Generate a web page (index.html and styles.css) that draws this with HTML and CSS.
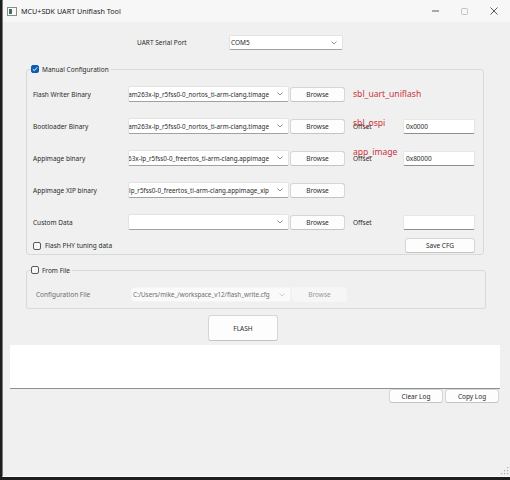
FILE: index.html
```html
<!DOCTYPE html>
<html lang="en">
<head>
    <meta charset="UTF-8">
    <meta name="viewport" content="width=device-width, initial-scale=1.0">
    <title>MCU+SDK UART Uniflash Tool</title>
    <link rel="stylesheet" href="styles.css">
</head>
<body>
    <div class="window">
        <div class="titlebar">
            <svg class="app-icon" width="10" height="9" viewBox="0 0 10 9">
                <rect x="0.5" y="0.5" width="9" height="8" fill="#fafafa" stroke="#8a8a8a"/>
                <rect x="2" y="2" width="3" height="5" fill="#3f6f66"/>
            </svg>
            <span class="title">MCU+SDK UART Uniflash Tool</span>
            <div class="caption">
                <span class="caption-btn">
                    <svg width="7" height="2" viewBox="0 0 7 2"><line x1="0" y1="1" x2="7" y2="1" stroke="#333" stroke-width="0.8"/></svg>
                </span>
                <span class="caption-btn">
                    <svg width="7" height="7" viewBox="0 0 7 7"><rect x="0.5" y="0.5" width="6" height="6" rx="1" fill="none" stroke="#b5b5b5" stroke-width="0.8"/></svg>
                </span>
                <span class="caption-btn">
                    <svg width="8" height="8" viewBox="0 0 8 8"><path d="M0.5 0.5 L7.5 7.5 M7.5 0.5 L0.5 7.5" stroke="#333" stroke-width="0.8"/></svg>
                </span>
            </div>
        </div>

        <div class="port-row">
            <span class="port-label">UART Serial Port</span>
            <div class="combo port-combo">
                <div class="combo-text start"><span>COM5</span></div>
                <svg class="chevron" width="6" height="4" viewBox="0 0 6 4"><polyline points="0.5,0.5 3,3 5.5,0.5" fill="none" stroke="#666" stroke-width="0.7"/></svg>
            </div>
        </div>

        <fieldset class="group manual">
            <legend><span class="check checked"><svg width="8" height="8" viewBox="0 0 8 8"><polyline points="1.8,4.2 3.3,5.6 6.2,2.4" fill="none" stroke="#fff" stroke-width="1"/></svg></span>Manual Configuration</legend>

            <div class="row">
                <span class="field-label">Flash Writer Binary</span>
                <div class="combo">
                    <div class="combo-text"><span>am263x-lp_r5fss0-0_nortos_ti-arm-clang.timage</span></div>
                    <svg class="chevron" width="6" height="4" viewBox="0 0 6 4"><polyline points="0.5,0.5 3,3 5.5,0.5" fill="none" stroke="#666" stroke-width="0.7"/></svg>
                </div>
                <button class="btn browse">Browse</button>
                <div class="note"><span class="red">sbl_uart_uniflash</span></div>
            </div>

            <div class="row">
                <span class="field-label">Bootloader Binary</span>
                <div class="combo">
                    <div class="combo-text"><span>am263x-lp_r5fss0-0_nortos_ti-arm-clang.timage</span></div>
                    <svg class="chevron" width="6" height="4" viewBox="0 0 6 4"><polyline points="0.5,0.5 3,3 5.5,0.5" fill="none" stroke="#666" stroke-width="0.7"/></svg>
                </div>
                <button class="btn browse">Browse</button>
                <div class="note">Offset<span class="red over sbl">sbl_ospi</span></div>
                <div class="edit">0x0000</div>
            </div>

            <div class="row">
                <span class="field-label">Appimage binary</span>
                <div class="combo">
                    <div class="combo-text"><span>am263x-lp_r5fss0-0_freertos_ti-arm-clang.appimage</span></div>
                    <svg class="chevron" width="6" height="4" viewBox="0 0 6 4"><polyline points="0.5,0.5 3,3 5.5,0.5" fill="none" stroke="#666" stroke-width="0.7"/></svg>
                </div>
                <button class="btn browse">Browse</button>
                <div class="note">Offset<span class="red over app">app_image</span></div>
                <div class="edit">0x80000</div>
            </div>

            <div class="row">
                <span class="field-label">Appimage XIP binary</span>
                <div class="combo">
                    <div class="combo-text"><span>am263x-lp_r5fss0-0_freertos_ti-arm-clang.appimage_xip</span></div>
                    <svg class="chevron" width="6" height="4" viewBox="0 0 6 4"><polyline points="0.5,0.5 3,3 5.5,0.5" fill="none" stroke="#666" stroke-width="0.7"/></svg>
                </div>
                <button class="btn browse">Browse</button>
            </div>

            <div class="row">
                <span class="field-label">Custom Data</span>
                <div class="combo">
                    <div class="combo-text"><span></span></div>
                    <svg class="chevron" width="6" height="4" viewBox="0 0 6 4"><polyline points="0.5,0.5 3,3 5.5,0.5" fill="none" stroke="#666" stroke-width="0.7"/></svg>
                </div>
                <button class="btn browse">Browse</button>
                <div class="note">Offset</div>
                <div class="edit"></div>
            </div>

            <div class="row tail">
                <span class="check"></span>
                <span class="check-label">Flash PHY tuning data</span>
                <button class="btn save">Save CFG</button>
            </div>
        </fieldset>

        <fieldset class="group from-file">
            <legend><span class="check"></span>From File</legend>
            <div class="row file-row">
                <span class="field-label muted">Configuration File</span>
                <div class="combo disabled">
                    <div class="combo-text start"><span>C:/Users/mike_/workspace_v12/flash_write.cfg</span></div>
                    <svg class="chevron" width="6" height="4" viewBox="0 0 6 4"><polyline points="0.5,0.5 3,3 5.5,0.5" fill="none" stroke="#bbb" stroke-width="0.7"/></svg>
                </div>
                <button class="btn browse disabled">Browse</button>
            </div>
        </fieldset>

        <button class="btn flash">FLASH</button>

        <div class="log"></div>
        <div class="log-buttons">
            <button class="btn log-btn">Clear Log</button>
            <button class="btn log-btn">Copy Log</button>
        </div>

        <svg class="grip" width="8" height="8" viewBox="0 0 8 8">
            <rect x="6" y="0" width="1.2" height="1.2" fill="#b0b0b0"/>
            <rect x="3" y="3" width="1.2" height="1.2" fill="#b0b0b0"/>
            <rect x="6" y="3" width="1.2" height="1.2" fill="#b0b0b0"/>
            <rect x="0" y="6" width="1.2" height="1.2" fill="#b0b0b0"/>
            <rect x="3" y="6" width="1.2" height="1.2" fill="#b0b0b0"/>
            <rect x="6" y="6" width="1.2" height="1.2" fill="#b0b0b0"/>
        </svg>
    </div>
</body>
</html>
```

FILE: styles.css
```css
body {
    margin: 0;
    padding: 0;
    background-color: #1e1e1e;
    font-family: "Noto Sans", "Open Sans", sans-serif;
    font-size: 6.5px;
    color: #2b2b2b;
}
.window {
    margin-left: 2px;
    width: 507px;
    height: 476px;
    border-left: 1px solid #7c7c7c;
    border-bottom: 1px solid #fbfbfb;
    background-color: #f0f0f0;
    display: flex;
    flex-direction: column;
}
.titlebar {
    height: 22px;
    flex-shrink: 0;
    background-color: #f7f7f7;
    display: flex;
    align-items: center;
}
.app-icon {
    margin-left: 4px;
}
.title {
    margin-left: 4px;
    font-size: 7.2px;
    color: #222;
}
.caption {
    margin-left: auto;
    margin-right: 2px;
    display: flex;
}
.caption-btn {
    width: 29px;
    height: 22px;
    display: flex;
    align-items: center;
    justify-content: center;
}
.port-row {
    margin-top: 13px;
    padding-left: 134px;
    height: 15px;
    display: flex;
    align-items: center;
}
.port-label {
    width: 92px;
}
.combo {
    box-sizing: border-box;
    width: 161px;
    height: 16px;
    background: #fff;
    border: 1px solid #e3e3e3;
    border-bottom-color: #a2a2a2;
    border-radius: 2px;
    display: flex;
    align-items: center;
    font-size: 6.3px;
}
.port-combo {
    width: 114px;
    height: 15px;
    font-size: 6.5px;
}
.combo-text {
    flex: 1;
    min-width: 0;
    overflow: hidden;
    white-space: nowrap;
    display: flex;
    justify-content: flex-end;
}
.combo-text span {
    flex-shrink: 0;
}
.combo-text.start {
    justify-content: flex-start;
    padding-left: 1px;
}
.chevron {
    flex-shrink: 0;
    margin: 0 5px 0 8px;
}
.group {
    box-sizing: border-box;
    margin: 0 0 0 23px;
    border: 1px solid #d9d9d9;
    border-radius: 3px;
    min-width: 0;
}
.group legend {
    display: flex;
    align-items: center;
    gap: 3px;
    height: 10px;
    padding: 0 2px 0 0;
}
.manual {
    margin-top: 14px;
    width: 458px;
    padding: 12px 7px 1px 6px;
}
.manual legend {
    margin-left: -2px;
}
.from-file {
    margin-top: 10px;
    width: 460px;
    padding: 12px 7px 6px 9px;
}
.from-file legend {
    margin-left: -5px;
}
.check {
    box-sizing: border-box;
    width: 8px;
    height: 8px;
    border: 1px solid #5a5a5a;
    border-radius: 2px;
    background: #f7f7f7;
    display: inline-flex;
    flex-shrink: 0;
}
.check.checked {
    border-color: #0a5fb4;
    background: #0a5fb4;
}
.check.checked svg {
    margin: -1px;
}
.row {
    display: flex;
    align-items: center;
    height: 16px;
}
.row + .row {
    margin-top: 16px;
}
.row.tail {
    margin-top: 8px;
    height: 15px;
}
.field-label {
    width: 95px;
    flex-shrink: 0;
}
.muted {
    color: #6d6d6d;
}
.btn {
    box-sizing: border-box;
    font-family: inherit;
    font-size: 6.5px;
    color: #2b2b2b;
    background: #fdfdfd;
    border: 1px solid #d6d6d6;
    border-bottom-color: #c4c4c4;
    border-radius: 3px;
    padding: 0;
    cursor: pointer;
}
.browse {
    width: 55px;
    height: 15px;
    margin-left: 1px;
}
.browse.disabled {
    background: #f6f6f6;
    border-color: #f6f6f6;
    color: #9a9a9a;
}
.note {
    position: relative;
    width: 50px;
    margin-left: 8px;
    white-space: nowrap;
}
.red {
    color: #c9323d;
    font-size: 8.6px;
}
.red.over {
    position: absolute;
    left: 0;
}
.red.sbl {
    top: -5px;
}
.red.app {
    top: -8px;
}
.edit {
    box-sizing: border-box;
    width: 72px;
    height: 15px;
    background: #fff;
    border: 1px solid #e6e6e6;
    border-bottom-color: #8d8d8d;
    border-radius: 2px;
    padding-left: 2px;
    display: flex;
    align-items: center;
}
.check-label {
    margin-left: 4px;
}
.save {
    width: 70px;
    height: 15px;
    margin-left: auto;
    margin-right: 1px;
}
.file-row {
    height: 15px;
}
.file-row .combo {
    width: 160px;
    height: 15px;
}
.combo.disabled {
    background: #fafafa;
    border-color: #f4f4f4;
    color: #6e6e6e;
}
.flash {
    margin: 6px 0 0 205px;
    width: 70px;
    height: 26px;
    flex-shrink: 0;
}
.log {
    margin: 4px 0 0 7px;
    width: 490px;
    height: 43px;
    flex-shrink: 0;
    background: #fff;
    border-bottom: 1px solid #8e8e8e;
}
.log-buttons {
    display: flex;
    justify-content: flex-end;
    gap: 2px;
    margin-right: 11px;
}
.log-btn {
    width: 54px;
    height: 14px;
}
.grip {
    margin-top: auto;
    align-self: flex-end;
    margin-right: 1px;
    margin-bottom: 1px;
}
```
